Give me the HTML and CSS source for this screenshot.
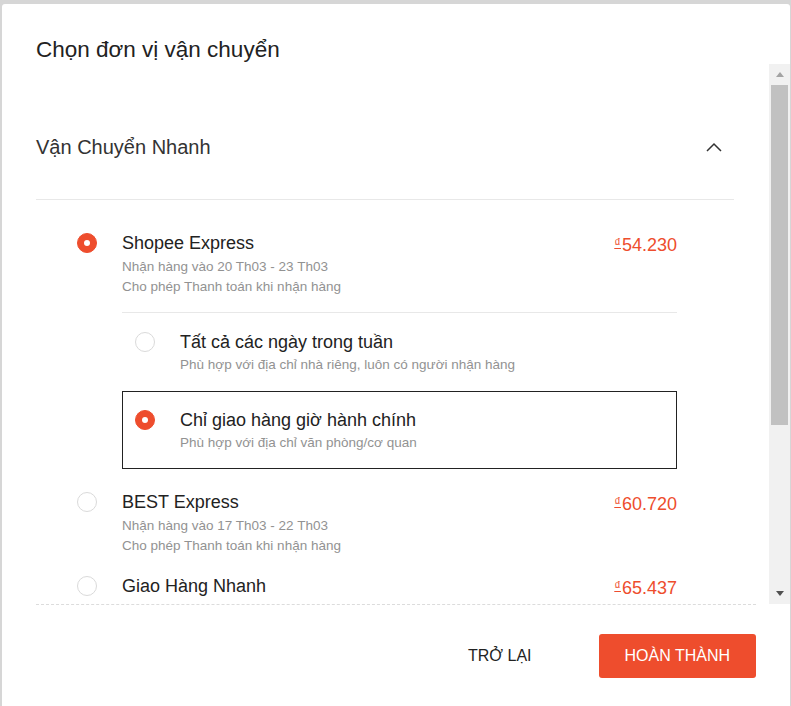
FILE: index.html
```html
<!DOCTYPE html>
<html lang="vi">
<head>
<meta charset="utf-8">
<title>Chọn đơn vị vận chuyển</title>
<link rel="stylesheet" href="styles.css">
</head>
<body>
<div class="modal">
  <div class="modal-header">Chọn đơn vị vận chuyển</div>
  <div class="modal-body">
    <div class="scroll-content">
      <div class="group-header">
        <span class="group-title">Vận Chuyển Nhanh</span>
        <svg class="chevron" viewBox="0 0 16 10" aria-hidden="true"><polyline points="1,9 8,2 15,9" fill="none" stroke="#333" stroke-width="1.5"/></svg>
      </div>
      <div class="options">
        <div class="option">
          <div class="option-main">
            <span class="radio radio--checked"></span>
            <div class="option-info">
              <div class="option-name">Shopee Express</div>
              <div class="option-detail">Nhận hàng vào 20 Th03 - 23 Th03</div>
              <div class="option-detail">Cho phép Thanh toán khi nhận hàng</div>
            </div>
            <div class="price"><span class="currency">₫</span>54.230</div>
          </div>
          <div class="sub-options">
            <div class="sub-option">
              <span class="radio"></span>
              <div class="option-info">
                <div class="option-name">Tất cả các ngày trong tuần</div>
                <div class="sub-detail">Phù hợp với địa chỉ nhà riêng, luôn có người nhận hàng</div>
              </div>
            </div>
            <div class="sub-option sub-option--selected">
              <span class="radio radio--checked"></span>
              <div class="option-info">
                <div class="option-name">Chỉ giao hàng giờ hành chính</div>
                <div class="sub-detail">Phù hợp với địa chỉ văn phòng/cơ quan</div>
              </div>
            </div>
          </div>
        </div>
        <div class="option">
          <div class="option-main">
            <span class="radio"></span>
            <div class="option-info">
              <div class="option-name">BEST Express</div>
              <div class="option-detail">Nhận hàng vào 17 Th03 - 22 Th03</div>
              <div class="option-detail">Cho phép Thanh toán khi nhận hàng</div>
            </div>
            <div class="price"><span class="currency">₫</span>60.720</div>
          </div>
        </div>
        <div class="option">
          <div class="option-main">
            <span class="radio"></span>
            <div class="option-info">
              <div class="option-name">Giao Hàng Nhanh</div>
            </div>
            <div class="price"><span class="currency">₫</span>65.437</div>
          </div>
        </div>
      </div>
    </div>
    <div class="scrollbar">
      <div class="sb-btn"><span class="tri tri-up"></span></div>
      <div class="sb-thumb"></div>
      <div class="sb-track"></div>
      <div class="sb-btn"><span class="tri tri-down"></span></div>
    </div>
  </div>
  <div class="modal-footer">
    <div class="footer-inner">
      <button class="btn btn-back" type="button">Trở lại</button>
      <button class="btn btn-primary" type="button">Hoàn thành</button>
    </div>
  </div>
</div>
</body>
</html>
```
FILE: styles.css
```css
* { box-sizing: border-box; }
html, body { margin: 0; height: 100%; }
body {
  background: #d6d6d6;
  font-family: "Liberation Sans", Arial, sans-serif;
  overflow: hidden;
}
.modal {
  margin: 4px 0 0 2px;
  width: 788px;
  height: 720px;
  background: #fff;
  border-radius: 3px 3px 0 0;
  display: flex;
  flex-direction: column;
}
.modal-header {
  height: 60px;
  padding: 32px 34px 0;
  font-size: 22.5px;
  line-height: 28px;
  color: #222;
}
.modal-body {
  display: flex;
  height: 540px;
}
.scroll-content {
  flex: 1;
  overflow: hidden;
  padding: 0 35px 0 34px;
}
.group-header {
  display: flex;
  align-items: center;
  justify-content: space-between;
  padding: 73px 12px 42px 0;
  border-bottom: 1px solid #e8e8e8;
}
.group-title {
  font-size: 20px;
  line-height: 20px;
  color: #333;
}
.chevron { width: 16px; height: 10px; display: block; }
.options {
  padding: 22px 57px 0 41px;
}
.option-main {
  display: flex;
  align-items: flex-start;
  padding: 9px 0;
}
.option-info { flex: 1; }
.option-name {
  font-size: 18px;
  line-height: 24px;
  color: #222;
}
.option-detail {
  font-size: 13.5px;
  line-height: 20px;
  color: #929292;
}
.option-name + .option-detail { margin-top: 2px; }
.sub-detail {
  margin-top: 1px;
  font-size: 13.5px;
  line-height: 20px;
  color: #929292;
}
.price {
  font-size: 18px;
  line-height: 24px;
  color: #ee4d2d;
}
.currency {
  font-size: 13px;
  text-decoration: underline;
  vertical-align: 4px;
  margin-right: 1px;
}
.radio {
  flex: none;
  width: 20px;
  height: 20px;
  margin: 2px 25px 0 0;
  border-radius: 50%;
  border: 1px solid #dadada;
  background: #fff;
  display: flex;
  align-items: center;
  justify-content: center;
}
.radio--checked {
  background: #ee4d2d;
  border-color: #ee4d2d;
}
.radio--checked::after {
  content: "";
  width: 6px;
  height: 6px;
  border-radius: 50%;
  background: #fff;
}
.sub-options {
  margin: 6px 0 12px 45px;
  border-top: 1px solid #e8e8e8;
}
.sub-option {
  display: flex;
  align-items: flex-start;
  padding: 16px 12px 15px;
  border: 1px solid transparent;
}
.sub-option--selected {
  border: 1.5px solid #222;
}
.scrollbar {
  width: 21px;
  flex: none;
  background: #f1f1f1;
  display: flex;
  flex-direction: column;
}
.sb-btn {
  height: 21px;
  display: flex;
  align-items: center;
  justify-content: center;
}
.sb-thumb {
  height: 340px;
  margin: 0 2px;
  background: #c1c1c1;
}
.sb-track { flex: 1; }
.tri {
  width: 0;
  height: 0;
  border-left: 4.5px solid transparent;
  border-right: 4.5px solid transparent;
}
.tri-up { border-bottom: 5px solid #a3a3a3; }
.tri-down { border-top: 5px solid #505050; }
.modal-footer {
  padding: 0 34px 0 34px;
}
.footer-inner {
  border-top: 1px dashed #dcdcdc;
  padding-top: 29px;
  display: flex;
  justify-content: flex-end;
  align-items: center;
}
.btn {
  height: 44px;
  padding: 0 26px;
  border: 0;
  border-radius: 3px;
  font-family: inherit;
  font-size: 16px;
  text-transform: uppercase;
  cursor: pointer;
}
.btn-back {
  background: none;
  color: #222;
  margin-right: 41px;
}
.btn-primary {
  background: #ee4d2d;
  color: #fff;
}
```
